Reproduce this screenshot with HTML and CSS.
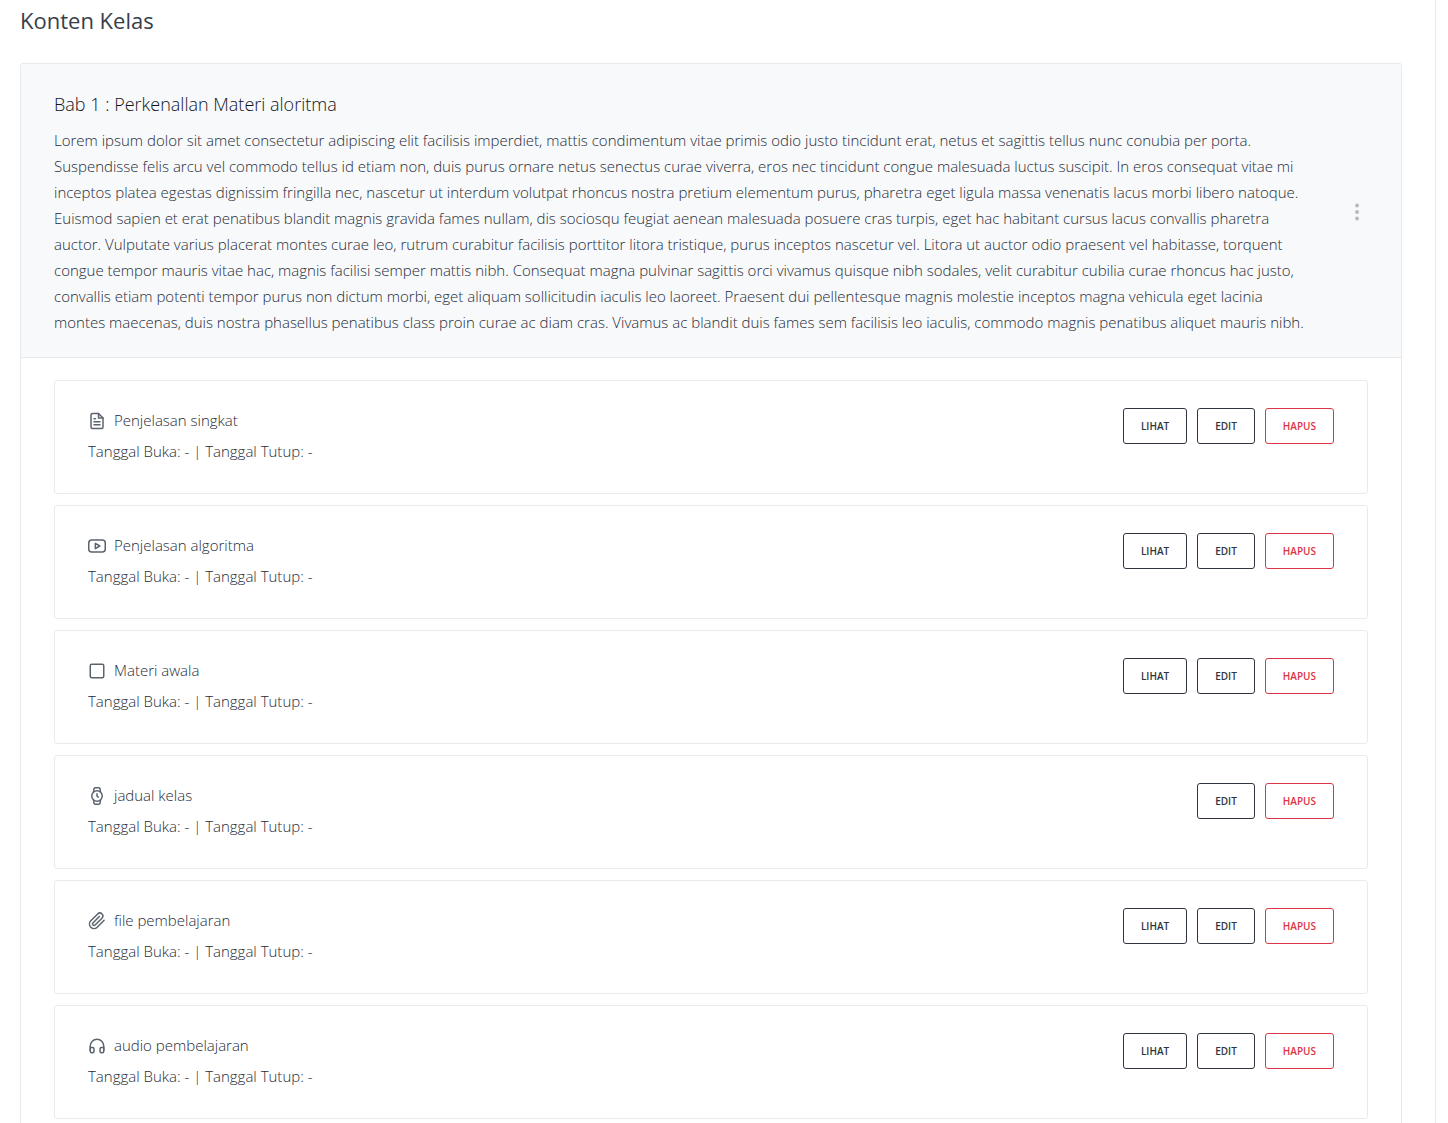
FILE: index.html
```html
<!DOCTYPE html>
<html lang="id">
<head>
<meta charset="utf-8">
<meta name="viewport" content="width=device-width, initial-scale=1">
<title>Konten Kelas</title>
<link rel="stylesheet" href="styles.css">
</head>
<body>
<main class="page">
  <h1 class="page-title">Konten Kelas</h1>
  <section class="chapter">
    <header class="chapter-head">
      <div class="chapter-text">
        <h2 class="chapter-title">Bab 1 : Perkenallan Materi aloritma</h2>
        <p class="chapter-desc">Lorem ipsum dolor sit amet consectetur adipiscing elit facilisis imperdiet, mattis condimentum vitae primis odio justo tincidunt erat, netus et sagittis tellus nunc conubia per porta.<br>
        Suspendisse felis arcu vel commodo tellus id etiam non, duis purus ornare netus senectus curae viverra, eros nec tincidunt congue malesuada luctus suscipit. In eros consequat vitae mi<br>
        inceptos platea egestas dignissim fringilla nec, nascetur ut interdum volutpat rhoncus nostra pretium elementum purus, pharetra eget ligula massa venenatis lacus morbi libero natoque.<br>
        Euismod sapien et erat penatibus blandit magnis gravida fames nullam, dis sociosqu feugiat aenean malesuada posuere cras turpis, eget hac habitant cursus lacus convallis pharetra<br>
        auctor. Vulputate varius placerat montes curae leo, rutrum curabitur facilisis porttitor litora tristique, purus inceptos nascetur vel. Litora ut auctor odio praesent vel habitasse, torquent<br>
        congue tempor mauris vitae hac, magnis facilisi semper mattis nibh. Consequat magna pulvinar sagittis orci vivamus quisque nibh sodales, velit curabitur cubilia curae rhoncus hac justo,<br>
        convallis etiam potenti tempor purus non dictum morbi, eget aliquam sollicitudin iaculis leo laoreet. Praesent dui pellentesque magnis molestie inceptos magna vehicula eget lacinia<br>
        montes maecenas, duis nostra phasellus penatibus class proin curae ac diam cras. Vivamus ac blandit duis fames sem facilisis leo iaculis, commodo magnis penatibus aliquet mauris nibh.</p>
      </div>
      <button class="menu-button" type="button" aria-label="Menu">
        <svg class="menu-icon" viewBox="0 0 4 18"><circle cx="2" cy="2.5" r="2"/><circle cx="2" cy="9" r="2"/><circle cx="2" cy="15.5" r="2"/></svg>
      </button>
    </header>
    <ul class="items">
      <li class="item">
        <div class="item-text">
          <h3 class="item-title"><svg class="icon" viewBox="0 0 24 24"><path d="M14 2H6a2 2 0 0 0-2 2v16a2 2 0 0 0 2 2h12a2 2 0 0 0 2-2V8z"/><path d="M14 2v6h6M16 13H8M16 17H8M10 9H8"/></svg>Penjelasan singkat</h3>
          <p class="item-dates">Tanggal Buka: - | Tanggal Tutup: -</p>
        </div>
        <div class="actions"><button class="btn" type="button">LIHAT</button><button class="btn" type="button">EDIT</button><button class="btn btn-danger" type="button">HAPUS</button></div>
      </li>
      <li class="item">
        <div class="item-text">
          <h3 class="item-title"><svg class="icon" viewBox="0 0 24 24"><rect x="1" y="4" width="22" height="16" rx="4"/><path d="M9.75 8.5v7l6-3.500z"/></svg>Penjelasan algoritma</h3>
          <p class="item-dates">Tanggal Buka: - | Tanggal Tutup: -</p>
        </div>
        <div class="actions"><button class="btn" type="button">LIHAT</button><button class="btn" type="button">EDIT</button><button class="btn btn-danger" type="button">HAPUS</button></div>
      </li>
      <li class="item">
        <div class="item-text">
          <h3 class="item-title"><svg class="icon" viewBox="0 0 24 24"><rect x="3" y="3" width="18" height="18" rx="2"/></svg>Materi awala</h3>
          <p class="item-dates">Tanggal Buka: - | Tanggal Tutup: -</p>
        </div>
        <div class="actions"><button class="btn" type="button">LIHAT</button><button class="btn" type="button">EDIT</button><button class="btn btn-danger" type="button">HAPUS</button></div>
      </li>
      <li class="item">
        <div class="item-text">
          <h3 class="item-title"><svg class="icon" viewBox="0 0 24 24"><circle cx="12" cy="12" r="7"/><path d="M12 9v3l1.500 1.500M16.510 17.350l-.35 3.830a2 2 0 0 1-2 1.820H9.830a2 2 0 0 1-2-1.820l-.35-3.830m.01-10.700l.35-3.830A2 2 0 0 1 9.830 1h4.350a2 2 0 0 1 2 1.820l.35 3.830"/></svg>jadual kelas</h3>
          <p class="item-dates">Tanggal Buka: - | Tanggal Tutup: -</p>
        </div>
        <div class="actions"><button class="btn" type="button">EDIT</button><button class="btn btn-danger" type="button">HAPUS</button></div>
      </li>
      <li class="item">
        <div class="item-text">
          <h3 class="item-title"><svg class="icon" viewBox="0 0 24 24"><path d="M21.440 11.050l-9.190 9.190a6 6 0 0 1-8.490-8.490l9.190-9.190a4 4 0 0 1 5.660 5.660l-9.200 9.190a2 2 0 0 1-2.830-2.830l8.490-8.480"/></svg>file pembelajaran</h3>
          <p class="item-dates">Tanggal Buka: - | Tanggal Tutup: -</p>
        </div>
        <div class="actions"><button class="btn" type="button">LIHAT</button><button class="btn" type="button">EDIT</button><button class="btn btn-danger" type="button">HAPUS</button></div>
      </li>
      <li class="item">
        <div class="item-text">
          <h3 class="item-title"><svg class="icon" viewBox="0 0 24 24"><path d="M3 18v-6a9 9 0 0 1 18 0v6"/><path d="M21 19a2 2 0 0 1-2 2h-1a2 2 0 0 1-2-2v-3a2 2 0 0 1 2-2h3zM3 19a2 2 0 0 0 2 2h1a2 2 0 0 0 2-2v-3a2 2 0 0 0-2-2H3z"/></svg>audio pembelajaran</h3>
          <p class="item-dates">Tanggal Buka: - | Tanggal Tutup: -</p>
        </div>
        <div class="actions"><button class="btn" type="button">LIHAT</button><button class="btn" type="button">EDIT</button><button class="btn btn-danger" type="button">HAPUS</button></div>
      </li>
    </ul>
  </section>
</main>
</body>
</html>
```
FILE: styles.css
```css
* { box-sizing: border-box; }

body {
  margin: 0;
  background: #fff;
  color: #252c38;
  font-family: "Open Sans", sans-serif;
  font-size: 15px;
  font-weight: 300;
  line-height: 26px;
}

h1, h2, h3, p, ul { margin: 0; padding: 0; font-weight: inherit; }

.page {
  display: flex;
  flex-direction: column;
  min-height: 100vh;
  margin-right: 12px;
  padding: 4px 33px 0 20px;
  border-right: 1px solid #e7eaed;
}

.page-title {
  margin-bottom: 27px;
  color: #373e4a;
  font-size: 22px;
  font-weight: 400;
  line-height: 32px;
}

.chapter {
  flex: 1;
  border: 1px solid #e7eaed;
  border-bottom: 0;
  border-radius: 3px 3px 0 0;
}

.chapter-head {
  display: flex;
  align-items: center;
  gap: 20px;
  padding: 24px 42px 22px 33px;
  border-bottom: 1px solid #e7eaed;
  background: #f8f9fb;
}

.chapter-text { flex: 1; min-width: 0; }

.chapter-title {
  margin-bottom: 7px;
  color: #10151d;
  font-size: 18px;
  line-height: 32px;
}

.menu-button {
  display: flex;
  padding: 0;
  border: 0;
  background: none;
  cursor: pointer;
}

.menu-icon { width: 4px; height: 18px; fill: #bbb; }

.items {
  display: grid;
  gap: 11px;
  padding: 22px 33px 0;
  list-style: none;
}

.item {
  display: flex;
  justify-content: space-between;
  align-items: flex-start;
  min-height: 114px;
  padding: 26px 33px;
  border: 1px solid #e7ebef;
  border-radius: 3px;
}

.item-title {
  display: flex;
  align-items: center;
  gap: 8px;
  margin-bottom: 5px;
  font-size: 15px;
  line-height: 26px;
}

.icon {
  width: 18px;
  height: 18px;
  margin-top: 2px;
  fill: none;
  stroke: #5c636f;
  stroke-width: 2;
  stroke-linecap: round;
  stroke-linejoin: round;
}

.actions { display: flex; gap: 10px; padding-top: 1px; }

.btn {
  height: 36px;
  padding: 0 17px;
  border: 1px solid #2f353e;
  border-radius: 3px;
  background: #fff;
  color: #2f353e;
  font: 600 10px/18px "Open Sans", sans-serif;
  cursor: pointer;
}

.btn-danger { border-color: #dc3545; color: #dc3545; }
```
